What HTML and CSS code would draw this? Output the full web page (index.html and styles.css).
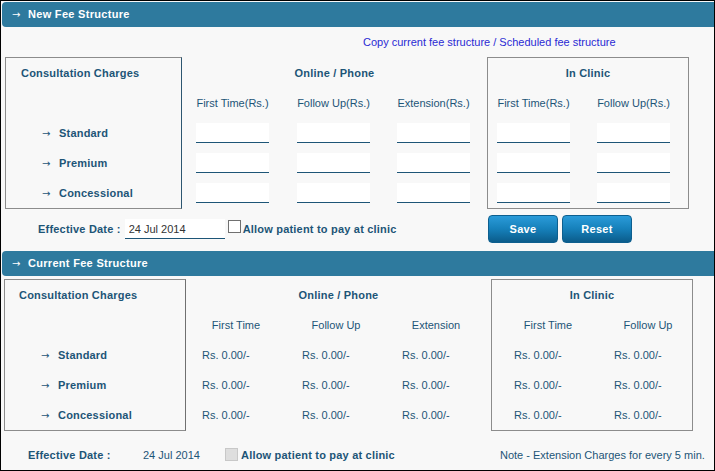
FILE: index.html
```html
<!DOCTYPE html>
<html>
<head>
<meta charset="utf-8">
<link rel="stylesheet" href="styles.css">
</head>
<body>
<div class="frame">
  <div class="bar"><span class="arr">&#8594;</span>New Fee Structure</div>
  <div class="links"><a href="#">Copy current fee structure</a> / <a href="#">Scheduled fee structure</a></div>

  <div class="fees fees-new">
    <div class="box cat cat-new">
      <div class="title left">Consultation Charges</div>
      <div class="row"></div>
      <div class="row lbl"><span class="arr">&#8594;</span>Standard</div>
      <div class="row lbl"><span class="arr">&#8594;</span>Premium</div>
      <div class="row lbl"><span class="arr">&#8594;</span>Concessional</div>
    </div>
    <div class="grp online-new">
      <div class="title">Online / Phone</div>
      <div class="grid g3">
        <div class="sub">First Time(Rs.)</div>
        <div class="sub">Follow Up(Rs.)</div>
        <div class="sub">Extension(Rs.)</div>
        <div class="cell"><input class="fee" type="text"></div>
        <div class="cell"><input class="fee" type="text"></div>
        <div class="cell"><input class="fee" type="text"></div>
        <div class="cell"><input class="fee" type="text"></div>
        <div class="cell"><input class="fee" type="text"></div>
        <div class="cell"><input class="fee" type="text"></div>
        <div class="cell"><input class="fee" type="text"></div>
        <div class="cell"><input class="fee" type="text"></div>
        <div class="cell"><input class="fee" type="text"></div>
      </div>
    </div>
    <div class="box grp clinic-new">
      <div class="title">In Clinic</div>
      <div class="grid g2">
        <div class="sub">First Time(Rs.)</div>
        <div class="sub">Follow Up(Rs.)</div>
        <div class="cell"><input class="fee" type="text"></div>
        <div class="cell"><input class="fee" type="text"></div>
        <div class="cell"><input class="fee" type="text"></div>
        <div class="cell"><input class="fee" type="text"></div>
        <div class="cell"><input class="fee" type="text"></div>
        <div class="cell"><input class="fee" type="text"></div>
      </div>
    </div>
  </div>

  <div class="eff-new">
    <div class="eff-left">
      <span class="blabel">Effective Date :</span>
      <input class="date" type="text" value="24 Jul 2014">
      <input class="chk" type="checkbox">
      <span class="blabel chk-label">Allow patient to pay at clinic</span>
    </div>
    <div class="btns">
      <button class="btn">Save</button>
      <button class="btn">Reset</button>
    </div>
  </div>

  <div class="bar"><span class="arr">&#8594;</span>Current Fee Structure</div>

  <div class="fees fees-cur">
    <div class="box cat cat-cur">
      <div class="title left">Consultation Charges</div>
      <div class="row"></div>
      <div class="row lbl"><span class="arr">&#8594;</span>Standard</div>
      <div class="row lbl"><span class="arr">&#8594;</span>Premium</div>
      <div class="row lbl"><span class="arr">&#8594;</span>Concessional</div>
    </div>
    <div class="grp online-cur">
      <div class="title">Online / Phone</div>
      <div class="grid c3">
        <div class="sub">First Time</div>
        <div class="sub">Follow Up</div>
        <div class="sub">Extension</div>
        <div class="val">Rs. 0.00/-</div>
        <div class="val">Rs. 0.00/-</div>
        <div class="val">Rs. 0.00/-</div>
        <div class="val">Rs. 0.00/-</div>
        <div class="val">Rs. 0.00/-</div>
        <div class="val">Rs. 0.00/-</div>
        <div class="val">Rs. 0.00/-</div>
        <div class="val">Rs. 0.00/-</div>
        <div class="val">Rs. 0.00/-</div>
      </div>
    </div>
    <div class="box grp clinic-cur">
      <div class="title">In Clinic</div>
      <div class="grid c2">
        <div class="sub">First Time</div>
        <div class="sub">Follow Up</div>
        <div class="val">Rs. 0.00/-</div>
        <div class="val">Rs. 0.00/-</div>
        <div class="val">Rs. 0.00/-</div>
        <div class="val">Rs. 0.00/-</div>
        <div class="val">Rs. 0.00/-</div>
        <div class="val">Rs. 0.00/-</div>
      </div>
    </div>
  </div>

  <div class="eff-cur">
    <span class="blabel">Effective Date :</span>
    <span class="dval">24 Jul 2014</span>
    <span class="chk-wrap"><input class="chk" type="checkbox" disabled><span class="blabel chk-label">Allow patient to pay at clinic</span></span>
    <span class="note">Note - Extension Charges for every 5 min.</span>
  </div>
</div>
</body>
</html>
```

FILE: styles.css
```css
html, body {
  margin: 0;
  padding: 0;
  background: #f8f8f8;
}

.frame {
  width: 715px;
  height: 471px;
  box-sizing: border-box;
  border: 1px solid #000;
  padding: 1px 0 0 1px;
  background: #f8f8f8;
  font-family: "Liberation Sans", Arial, sans-serif;
  font-size: 11px;
  color: #1d5577;
  overflow: hidden;
}

.bar {
  height: 25px;
  line-height: 25px;
  background: #2e7a9e;
  color: #fff;
  font-weight: bold;
  border-radius: 4px 0 0 4px;
  padding-left: 10px;
  letter-spacing: 0.3px;
}

.bar .arr {
  display: inline-block;
  width: 7px;
  margin-right: 9px;
  font-weight: normal;
  font-size: 10px;
  font-family: "DejaVu Sans", sans-serif;
}

.links {
  height: 30px;
  box-sizing: border-box;
  padding: 8px 0 0 361px;
  line-height: 14px;
  color: #2a2ad4;
}

.links a {
  color: #2a2ad4;
  text-decoration: none;
}

.fees {
  display: flex;
  align-items: flex-start;
}

.fees-new { margin-left: 3px; }
.fees-cur { margin-left: 2px; margin-top: 3px; }

.box {
  border: 1px solid #8c8c8c;
  box-sizing: border-box;
  height: 152px;
}

.cat-new { width: 177px; border-right-color: #2d5670; }
.cat-cur { width: 182px; border-right-color: #707070; }

.grp { box-sizing: border-box; height: 152px; padding-top: 1px; }
.box.grp { padding-top: 0; }

.online-new { width: 305px; }
.clinic-new { width: 202px; }
.online-cur { width: 305px; }
.clinic-cur { width: 202px; }

.title {
  height: 30px;
  line-height: 30px;
  text-align: center;
  font-weight: bold;
  letter-spacing: 0.2px;
}

.title.left { text-align: left; }
.cat-new .title { padding-left: 15px; }
.cat-cur .title { padding-left: 14px; }

.row {
  height: 30px;
  display: flex;
  align-items: center;
}

.lbl {
  font-weight: bold;
  letter-spacing: 0.2px;
}

.cat-new .lbl { padding-left: 36px; }
.cat-cur .lbl { padding-left: 36px; }

.lbl .arr {
  display: inline-block;
  width: 7px;
  margin-right: 10px;
  font-weight: normal;
  font-size: 10px;
  font-family: "DejaVu Sans", sans-serif;
}

.grid {
  display: grid;
  grid-auto-rows: 30px;
}

.g3 {
  grid-template-columns: 74px 73px 73px;
  column-gap: 27px;
  padding-left: 14px;
}

.g2 {
  grid-template-columns: 73px 73px;
  column-gap: 27px;
  padding-left: 9px;
}

.c3 {
  grid-template-columns: 100px 100px 100px;
}

.c2 {
  grid-template-columns: 100px 100px;
  padding-left: 6px;
}

.sub {
  display: flex;
  align-items: center;
  justify-content: center;
  white-space: nowrap;
}

.g3 .sub, .g2 .sub { width: 73px; }

.cell {
  display: flex;
  align-items: center;
}

.fee {
  width: 73px;
  height: 20px;
  box-sizing: border-box;
  border: none;
  border-bottom: 1px solid #1d5577;
  background: #fff;
  margin: 0;
  padding: 0 4px;
  outline: none;
}

.val {
  display: flex;
  align-items: center;
  padding-left: 16px;
  white-space: nowrap;
}

.eff-new {
  display: grid;
  grid-template-columns: 486px auto;
  align-items: center;
  height: 42px;
  box-sizing: border-box;
  padding-top: 6px;
  padding-bottom: 8px;
}

.eff-left {
  display: flex;
  align-items: center;
  padding-left: 36px;
}

.blabel {
  font-weight: bold;
  letter-spacing: 0.2px;
  white-space: nowrap;
}

.date {
  width: 100px;
  height: 20px;
  box-sizing: border-box;
  margin: 0 0 0 4px;
  padding: 0 4px;
  border: none;
  border-bottom: 1px solid #1d5577;
  background: #fff;
  font-family: "Liberation Sans", Arial, sans-serif;
  font-size: 11px;
  color: #333;
  outline: none;
}

.chk {
  appearance: none;
  -webkit-appearance: none;
  width: 13px;
  height: 13px;
  box-sizing: border-box;
  margin: 0 0 0 3px;
  border: 1px solid #707070;
  background: #fff;
  position: relative;
  top: -3px;
}

.chk:disabled {
  background: #dedede;
  border-color: #c8c8c8;
}

.chk-label { margin-left: 2px; }

.btns {
  display: flex;
  gap: 4px;
}

.btn {
  width: 70px;
  height: 28px;
  border: 1px solid #0d5f8f;
  border-radius: 4px;
  background: linear-gradient(to bottom, #2a9bd9 0%, #1680ba 50%, #0b5c8b 100%);
  color: #fff;
  font-family: "Liberation Sans", Arial, sans-serif;
  font-size: 11px;
  font-weight: bold;
  letter-spacing: 0.3px;
  padding: 0;
}

.eff-cur {
  display: grid;
  grid-template-columns: 115px 82px 275px auto;
  align-items: center;
  height: 24px;
  margin-top: 12px;
  padding-left: 26px;
}

.chk-wrap {
  display: flex;
  align-items: center;
}

.eff-cur .chk { margin-left: 0; top: -1px; }
.eff-cur .chk-label { margin-left: 3px; }

.dval, .note { white-space: nowrap; }
```
